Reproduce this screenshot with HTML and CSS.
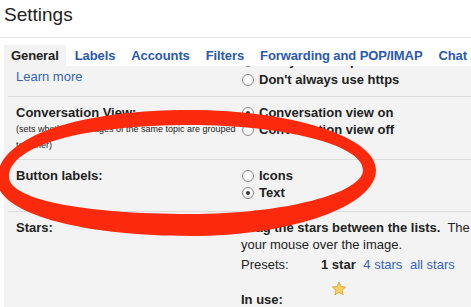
FILE: index.html
```html
<!DOCTYPE html>
<html lang="en">
<head>
  <meta charset="UTF-8" />
  <meta name="viewport" content="width=device-width, initial-scale=1.0" />
  <title>Settings</title>
  <link rel="stylesheet" href="styles.css">
</head>
<body>

<div class="page">
  <h1 class="title">Settings</h1>

  <nav class="tabs">
    <a class="tab active">General</a>
    <a class="tab">Labels</a>
    <a class="tab">Accounts</a>
    <a class="tab">Filters</a>
    <a class="tab">Forwarding and POP/IMAP</a>
    <a class="tab">Chat</a>
  </nav>

  <section class="panel">
    <div class="row row-first">
      <div class="label"><a class="link">Learn more</a></div>
      <div class="value value-first">
        <label class="radio radio-hidden"><span class="dot"></span>Always use https</label>
        <label class="radio"><span class="dot"></span>Don't always use https</label>
      </div>
    </div>

    <div class="row row-conv">
      <div class="label">
        <div class="name">Conversation View:</div>
        <div class="note">(sets whether messages of the same topic are grouped<br>together)</div>
      </div>
      <div class="value">
        <label class="radio"><span class="dot on"></span>Conversation view on</label>
        <label class="radio"><span class="dot"></span>Conversation view off</label>
      </div>
    </div>

    <div class="row">
      <div class="label"><div class="name">Button labels:</div></div>
      <div class="value">
        <label class="radio"><span class="dot"></span>Icons</label>
        <label class="radio"><span class="dot on"></span>Text</label>
      </div>
    </div>

    <div class="row">
      <div class="label"><div class="name">Stars:</div></div>
      <div class="value value-wide">
        <div class="hint"><b>Drag the stars between the lists.</b>&nbsp; The stars will rotate in the order shown below when you click successively. To learn the name of a star for search, hover<br>your mouse over the image.</div>
        <div class="stars-grid presets">
          <span>Presets:</span>
          <span class="preset-list">
            <b class="preset">1 star</b>
            <a class="link preset">4 stars</a>
            <a class="link preset">all stars</a>
          </span>
        </div>
        <div class="stars-grid in-use">
          <b class="in-use-label">In use:</b>
          <span class="star-box">
            <svg width="16" height="16" viewBox="0 0 16 16">
              <path d="M8 1.2 L9.9 5.6 L14.6 6 L11 9.1 L12.1 13.8 L8 11.3 L3.9 13.8 L5 9.1 L1.4 6 L6.1 5.6 Z" fill="#f8d162" stroke="#dba63a" stroke-width="0.9" stroke-linejoin="round"/>
            </svg>
          </span>
        </div>
      </div>
    </div>
  </section>

  <!-- red marker ring drawn over the page -->
  <svg class="ring" width="471" height="307" viewBox="0 0 471 307">
    <path fill="#fb2a0c" fill-rule="evenodd"
      d="M -3 180 C -3 138, 74 110, 190 110 C 292 110, 376 137, 376 170 C 376 206, 292 236, 190 236 C 78 236, -3 212.5, -3 180 Z
         M 9 177 C 9 145, 85 125, 190 125 C 285 125, 363 145, 363 170 C 363 193, 285 214, 190 214 C 81 214, 9 199, 9 177 Z"/>
  </svg>
</div>

</body>
</html>
```

FILE: styles.css
```css
* {
  margin: 0;
  padding: 0;
  box-sizing: border-box;
}

body {
  font-family: "Liberation Sans", Arial, sans-serif;
  font-size: 13px;
  line-height: 17px;
  color: #222;
  background: #fff;
  overflow: hidden;
}

.page {
  position: relative;
  width: 471px;
  height: 307px;
  overflow: hidden;
}

.title {
  font-size: 19px;
  font-weight: normal;
  line-height: 24px;
  padding: 3px 4px 10px;
  border-bottom: 1px solid #e5e5e5;
}

.tabs {
  display: flex;
  gap: 2px;
  margin-top: 7px;
  padding-left: 4px;
  height: 21px;
  white-space: nowrap;
  position: relative;
  z-index: 1;
  background: #fff;
}

.tab {
  padding: 0 7px;
  line-height: 21px;
  font-weight: bold;
  letter-spacing: -0.1px;
  color: #2a58ad;
}

.tab.active {
  color: #222;
  background: #f3f3f3;
}

.panel {
  margin-left: 4px;
  height: 241px;
  background: #f3f3f3;
}

.link {
  color: #3563b8;
}

.row {
  display: grid;
  grid-template-columns: 225px 1fr;
  margin-left: 4px;
  padding: 7px 0 10px 8px;
  border-top: 1px solid #dcdcdc;
}

.row-first {
  border-top: none;
  padding-top: 2px;
  padding-bottom: 8px;
}

.value-first {
  margin-top: -16px;
}

.radio-hidden {
  margin-bottom: 2px;
}

.row-conv {
  padding-bottom: 6px;
}

.name {
  font-weight: bold;
}

.note {
  font-size: 9px;
  line-height: 16px;
}

.value {
  display: flex;
  flex-direction: column;
}

.value-wide {
  width: 900px;
}

.radio {
  display: flex;
  align-items: center;
  font-weight: bold;
  white-space: nowrap;
}

.dot {
  width: 12px;
  height: 12px;
  margin: 0 5px 0 1px;
  border: 1px solid #8d8d8d;
  border-radius: 50%;
  background: radial-gradient(circle at 50% 35%, #fff 30%, #e4e4e4 100%);
  display: flex;
  align-items: center;
  justify-content: center;
}

.dot.on::after {
  content: "";
  width: 4px;
  height: 4px;
  border-radius: 50%;
  background: #333;
}

.hint {
  white-space: nowrap;
}

.stars-grid {
  display: grid;
  grid-template-columns: 80px 1fr;
}

.presets {
  margin-top: 3px;
}

.preset {
  margin-right: 4px;
}

.in-use {
  margin-top: 8px;
  align-items: start;
}

.in-use-label {
  padding-top: 10px;
}

.star-box {
  display: flex;
  padding-left: 10px;
}

.ring {
  position: absolute;
  left: 0;
  top: 0;
  pointer-events: none;
}
```
